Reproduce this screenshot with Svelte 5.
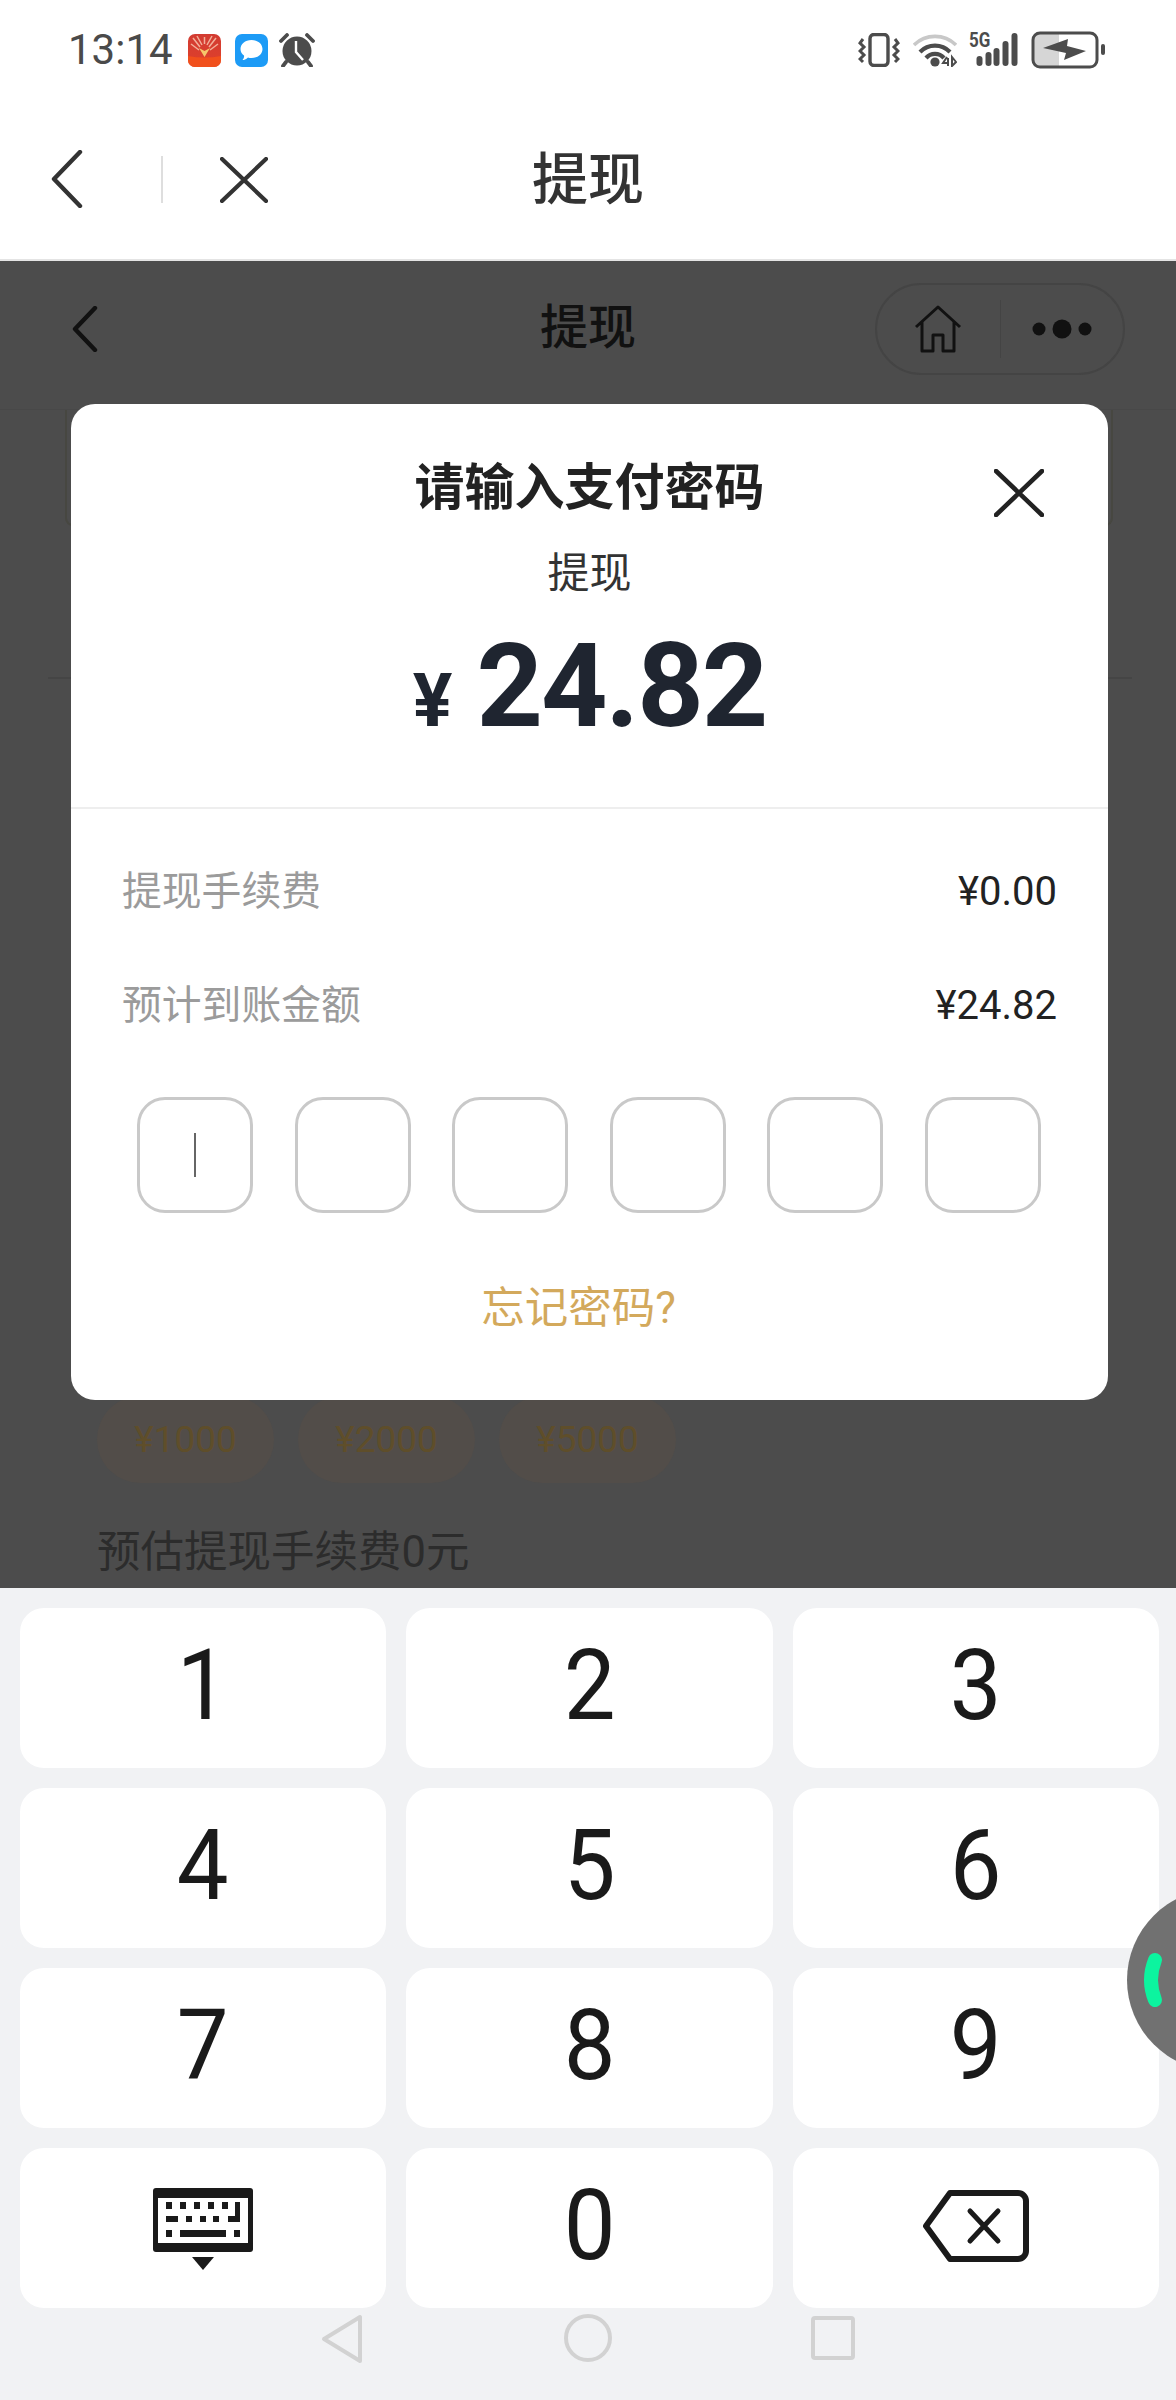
<script>
  const keys = ['1','2','3','4','5','6','7','8','9'];
  const boxes = [0,1,2,3,4,5];
</script>

<div class="screen">
  <div class="status">
    <div class="st-left">
      <span class="time">13:14</span>
      <svg class="ic33" viewBox="0 0 33 33">
        <defs><linearGradient id="rg" x1="0" y1="0" x2="0" y2="1"><stop offset="0" stop-color="#d23c32"/><stop offset="1" stop-color="#e0402a"/></linearGradient></defs>
        <rect width="33" height="33" rx="7" fill="url(#rg)"/>
        <path d="M0 22 Q16.5 25 33 22 L33 26 A7 7 0 0 1 26 33 L7 33 A7 7 0 0 1 0 26Z" fill="#f1501c"/>
        <path d="M5 4 L12 13 M28 4 L21 13 M9 2 L14 11 M24 2 L19 11 M3 10 L11 16 M30 10 L22 16 M16.5 3 V10" stroke="#f2b09a" stroke-width="1.5"/>
        <path d="M11 14 L16.5 23 L22 14 L16.5 17Z" fill="#f6c66a"/>
      </svg>
      <svg class="ic33 gap14" viewBox="0 0 33 33">
        <rect width="33" height="33" rx="7" fill="#1d9bf6"/>
        <path d="M16.5 6 C23 6 27.5 10 27.5 15 C27.5 20 23 24 16.5 24 C15 24 14 24 13 23.5 C11 25.5 9 26 7.5 26 C9 24.5 9.3 22.5 9 21.5 C6.8 20 5.5 18 5.5 15 C5.5 10 10 6 16.5 6Z" fill="#fff"/>
      </svg>
      <svg class="alarm" viewBox="0 0 36 34">
        <circle cx="18" cy="18" r="14.5" fill="#4c4c4c"/>
        <path d="M17 8 L17 19 L24 27" stroke="#fff" stroke-width="2.4" fill="none"/>
        <path d="M2 8 L8 2 M34 8 L28 2 M7 29 L4 33 M29 29 L32 33" stroke="#4c4c4c" stroke-width="3.8" stroke-linecap="round"/>
      </svg>
    </div>
    <div class="st-right">
      <svg class="vib" viewBox="0 0 42 34">
        <rect x="12" y="1.5" width="18" height="31" rx="4" fill="none" stroke="#4c4c4c" stroke-width="3.4"/>
        <path d="M5 6 L2 10 L6 14 L2 18 L6 22 L2 26 L5 29 M37 6 L40 10 L36 14 L40 18 L36 22 L40 26 L37 29" fill="none" stroke="#4c4c4c" stroke-width="3"/>
      </svg>
      <svg class="wifi" viewBox="0 0 44 34">
        <path d="M1 12 A30 30 0 0 1 43 12" fill="none" stroke="#c8c8c8" stroke-width="3.6"/>
        <path d="M7 19 A21 21 0 0 1 37 19" fill="none" stroke="#4c4c4c" stroke-width="4.2"/>
        <path d="M13 25 A12 12 0 0 1 31 25" fill="none" stroke="#4c4c4c" stroke-width="4.2"/>
        <circle cx="22" cy="29" r="4.6" fill="#4c4c4c"/>
        <path d="M34 24 L30 30 L35 30 M35 25 L35 33 M39 24 L39 33 L43 29Z" fill="none" stroke="#4c4c4c" stroke-width="2"/>
      </svg>
      <div class="sig">
        <span class="fiveg">5G</span>
        <svg class="bars" viewBox="0 0 44 34">
          <g fill="#4c4c4c">
            <rect x="6" y="23" width="6" height="10" rx="3"/>
            <rect x="15" y="19" width="6" height="14" rx="3"/>
            <rect x="23" y="15" width="6" height="18" rx="3"/>
            <rect x="32" y="8" width="6" height="25" rx="3"/>
            <rect x="41" y="0" width="6" height="33" rx="3"/>
          </g>
        </svg>
      </div>
      <svg class="batt" viewBox="0 0 74 38">
        <path d="M6 3 H28 V35 H6 A4 4 0 0 1 2 31 V7 A4 4 0 0 1 6 3Z" fill="#d6d6d6"/>
        <rect x="2" y="2" width="64" height="34" rx="7" fill="none" stroke="#4c4c4c" stroke-width="3"/>
        <rect x="70" y="13" width="4" height="11" rx="2" fill="#4c4c4c"/>
        <path d="M12 17 L37 8 L36 15 L55 20 L33 29 L35 22Z" fill="#4c4c4c"/>
      </svg>
    </div>
  </div>

  <div class="nav">
    <svg class="nav-back" viewBox="0 0 32 58"><path d="M29 2 L3 29 L29 56" fill="none" stroke="#333" stroke-width="4.4" stroke-linecap="round" stroke-linejoin="round"/></svg>
    <span class="nav-div"></span>
    <svg class="nav-x" viewBox="0 0 48 46"><path d="M2 2 L46 44 M46 2 L2 44" fill="none" stroke="#333" stroke-width="4.2" stroke-linecap="round"/></svg>
    <span class="nav-title">提现</span>
  </div>

  <div class="page">
    <div class="inner-nav">
      <svg class="in-back" viewBox="0 0 26 46"><path d="M23 2 L3 23 L23 44" fill="none" stroke="#111" stroke-width="4.4" stroke-linecap="round" stroke-linejoin="round"/></svg>
      <span class="in-title">提现</span>
      <div class="capsule">
        <svg class="home" viewBox="0 0 48 48"><path d="M2 22 L24 2 L46 22 M8 17 V46 H19 V30 H29 V46 H40 V17" fill="none" stroke="#111" stroke-width="3" stroke-linejoin="round"/></svg>
        <span class="cap-div"></span>
        <svg class="dots" viewBox="0 0 60 20"><circle cx="7" cy="10" r="6.5" fill="#111"/><circle cx="30" cy="10" r="9.5" fill="#111"/><circle cx="53" cy="10" r="6.5" fill="#111"/></svg>
      </div>
    </div>
    <div class="bg-card"></div>
    <div class="bg-rule"></div>
    <div class="chips">
      <span class="chip">¥1000</span>
      <span class="chip">¥2000</span>
      <span class="chip">¥5000</span>
    </div>
    <div class="est">预估提现手续费0元</div>

    <div class="modal">
      <div class="m-head">
        <div class="m-title">请输入支付密码</div>
        <svg class="m-x" viewBox="0 0 50 48"><path d="M2 2 L48 46 M48 2 L2 46" fill="none" stroke="#222" stroke-width="4.6" stroke-linecap="round"/></svg>
        <div class="m-sub">提现</div>
        <div class="m-amt"><span class="yen">¥</span><span class="num">24.82</span></div>
      </div>
      <div class="m-body">
        <div class="row"><span class="lab">提现手续费</span><span class="val">¥0.00</span></div>
        <div class="row"><span class="lab">预计到账金额</span><span class="val">¥24.82</span></div>
        <div class="pin">
          {#each boxes as b}
            <div class="box">{#if b === 0}<span class="caret"></span>{/if}</div>
          {/each}
        </div>
        <div class="forgot">忘记密码?</div>
      </div>
    </div>
  </div>

  <div class="kb">
    <div class="grid">
      {#each keys as k}
        <div class="key"><span class="d">{k}</span></div>
      {/each}
      <div class="key">
        <svg class="kbd" viewBox="0 0 100 82">
          <rect x="2.5" y="2.5" width="95" height="59" rx="3" fill="none" stroke="#1a1a1a" stroke-width="5"/>
          <rect x="0" y="0" width="100" height="10" rx="3" fill="#1a1a1a"/>
          <rect x="0" y="55" width="100" height="9" rx="3" fill="#1a1a1a"/>
          <g fill="#1a1a1a">
            <rect x="13" y="14" width="6" height="7"/><rect x="27" y="14" width="6" height="7"/><rect x="41" y="14" width="6" height="7"/><rect x="55" y="14" width="6" height="7"/><rect x="69" y="14" width="6" height="7"/>
            <rect x="82" y="14" width="5" height="20"/>
            <rect x="13" y="28" width="12" height="6"/><rect x="33" y="28" width="6" height="6"/><rect x="47" y="28" width="6" height="6"/><rect x="60" y="28" width="6" height="6"/><rect x="75" y="28" width="12" height="6"/>
            <rect x="13" y="42" width="6" height="7"/><rect x="27" y="42" width="46" height="7"/><rect x="81" y="42" width="6" height="7"/>
            <path d="M39 69 H61 L50 82Z"/>
          </g>
        </svg>
      </div>
      <div class="key"><span class="d">0</span></div>
      <div class="key">
        <svg class="bksp" viewBox="0 0 108 74">
          <path d="M28 4 H96 A8 8 0 0 1 104 12 V62 A8 8 0 0 1 96 70 H28 L4 37Z" fill="none" stroke="#1a1a1a" stroke-width="6" stroke-linejoin="round"/>
          <path d="M48 22 L76 52 M76 22 L48 52" fill="none" stroke="#1a1a1a" stroke-width="5" stroke-linecap="round"/>
        </svg>
      </div>
    </div>
    <div class="sysnav">
      <svg class="s-back" viewBox="0 0 42 50"><path d="M39 3 V47 L3 25Z" fill="none" stroke="#d2d2d2" stroke-width="4" stroke-linejoin="round"/></svg>
      <svg class="s-home" viewBox="0 0 48 48"><circle cx="24" cy="24" r="22" fill="none" stroke="#d2d2d2" stroke-width="4"/></svg>
      <svg class="s-rec" viewBox="0 0 44 44"><rect x="2" y="2" width="40" height="40" rx="2" fill="none" stroke="#d2d2d2" stroke-width="4"/></svg>
    </div>
  </div>

  <svg class="ball" viewBox="0 0 49 164">
    <circle cx="91" cy="82" r="91" fill="#717171"/>
    <path d="M28 62 Q20 82 28 102" fill="none" stroke="#0cf49f" stroke-width="14" stroke-linecap="round"/>
  </svg>
</div>

<style>
  :global(body) { margin: 0; background: #fff; }
  .screen {
    position: relative;
    width: 1176px;
    height: 2400px;
    overflow: hidden;
    display: flex;
    flex-direction: column;
    font-family: Roboto, "Noto Sans CJK SC", sans-serif;
    background: #fff;
  }
  .status {
    height: 100px;
    box-sizing: border-box;
    padding: 0 71px 0 68px;
    display: flex;
    justify-content: space-between;
    align-items: center;
  }
  .st-left, .st-right { display: flex; align-items: center; }
  .time { font-size: 42px; color: #4a4a4a; line-height: 48px; width: 120px; }
  .ic33 { width: 33px; height: 33px; display: block; }
  .gap14 { margin-left: 14px; }
  .alarm { width: 36px; height: 34px; margin-left: 11px; display: block; }
  .vib { width: 42px; height: 34px; display: block; }
  .wifi { width: 44px; height: 34px; margin-left: 13px; display: block; }
  .sig { position: relative; width: 62px; margin-left: 12px; height: 34px; }
  .fiveg { position: absolute; left: 0; top: -4px; font-size: 20px; font-weight: 700; color: #4c4c4c; line-height: 22px; transform: scaleX(.85); transform-origin: left; }
  .bars { position: absolute; left: 0; top: 0; width: 47px; height: 34px; overflow: visible; display: block; }
  .batt { width: 74px; height: 38px; display: block; }

  .nav {
    height: 161px;
    flex: none;
    box-sizing: border-box;
    border-bottom: 2px solid #e4e4e4;
    display: flex;
    align-items: center;
    padding: 0 0 0 51px;
    position: relative;
  }
  .nav-back { width: 32px; height: 58px; display: block; margin-top: -2px; }
  .nav-div { width: 2px; height: 47px; background: #dedede; margin-left: 78px; }
  .nav-x { width: 48px; height: 46px; margin-left: 57px; display: block; }
  .nav-title {
    position: absolute;
    left: 0; right: 0;
    text-align: center;
    font-size: 56px;
    font-weight: 500;
    line-height: 60px;
    color: #333;
  }

  .page {
    position: relative;
    flex: none;
    height: 1327px;
    background: #4c4c4c;
    overflow: hidden;
  }
  .inner-nav {
    height: 149px;
    position: relative;
    display: flex;
    align-items: center;
    justify-content: flex-end;
    padding: 0 51px 12px 72px;
    box-sizing: border-box;
    border-bottom: 1px solid #484848;
  }
  .in-back { width: 26px; height: 46px; margin-right: auto; display: block; }
  .in-title {
    position: absolute; left: 0; right: 0; text-align: center;
    font-size: 48px; font-weight: 500; color: #111; line-height: 56px; top: 39px;
  }
  .capsule {
    width: 250px; height: 92px; box-sizing: border-box;
    border: 2px solid #444; border-radius: 46px;
    display: flex; align-items: center; padding-left: 37px;
  }
  .home { width: 48px; height: 48px; display: block; }
  .cap-div { width: 1px; height: 58px; background: #444; margin-left: 38px; }
  .dots { width: 60px; height: 20px; margin-left: 31px; display: block; }
  .bg-card {
    height: 116px; margin: 0 63px 0 65px;
    border: 2px solid #474741; border-top: 0;
    border-radius: 0 0 8px 8px;
    box-sizing: border-box;
  }
  .bg-rule { margin: 151px 44px 0 48px; height: 2px; background: #454545; }
  .chips { display: flex; gap: 24px; padding-left: 97px; margin-top: 717px; }
  .chip {
    width: 177px; height: 87px; border-radius: 44px; background: #524d49;
    color: #5f4e2a; font-size: 37px; display: flex; align-items: center; justify-content: center;
  }
  .est { margin: 43px 0 0 97px; font-size: 43.5px; line-height: 54px; color: #2c2c2c; }

  .modal {
    position: absolute;
    left: 71px; top: 143px;
    width: 1037px; height: 996px;
    background: #fff;
    border-radius: 24px;
  }
  .m-head { height: 405px; box-sizing: border-box; border-bottom: 2px solid #eee; text-align: center; padding-top: 50px; position: relative; }
  .m-title { font-size: 50px; font-weight: 700; color: #222; line-height: 68px; }
  .m-x { position: absolute; left: 923px; top: 65px; width: 50px; height: 48px; }
  .m-sub { font-size: 42px; color: #333; line-height: 56px; margin-top: 24px; }
  .m-amt { display: flex; justify-content: center; align-items: baseline; margin-top: 19px; margin-left: 0; color: #1f2530; }
  .yen { font-size: 74px; font-weight: 700; margin-right: 24px; }
  .num { font-size: 116px; font-weight: 700; line-height: 130px; letter-spacing: -2px; }
  .m-body { padding: 0 51px; }
  .row { height: 114px; display: flex; justify-content: space-between; align-items: center; }
  .row:first-child { margin-top: 25px; }
  .lab { font-size: 39.8px; color: #9b9b9b; margin-bottom: 8px; }
  .val { font-size: 40px; color: #222; }
  .pin { display: flex; justify-content: space-between; padding: 0 16px 0 15px; margin-top: 35px; }
  .box {
    width: 116px; height: 116px; box-sizing: border-box;
    border: 3px solid #c9c9c9; border-radius: 28px;
    display: flex; align-items: center; justify-content: center;
  }
  .caret { width: 2px; height: 44px; background: #666; }
  .forgot { text-align: center; margin-top: 69px; font-size: 43.5px; line-height: 54px; color: #d3a95c; margin-left: -22px; }

  .kb {
    flex: 1;
    background: #f1f2f4;
    display: flex;
    flex-direction: column;
  }
  .grid {
    display: grid;
    grid-template-columns: 366px 367px 366px;
    grid-auto-rows: 160px;
    gap: 20px;
    padding: 20px 17px 0 20px;
  }
  .key {
    background: #fff; border-radius: 24px;
    display: flex; align-items: center; justify-content: center;
  }
  .d { font-size: 98px; line-height: 1; color: #1a1a1a; transform: translateY(-2px) scaleX(.94); display: block; }
  .kbd { width: 100px; height: 82px; display: block; margin-top: 2px; }
  .bksp { width: 108px; height: 74px; display: block; margin-top: -4px; }
  .sysnav { position: relative; height: 60px; margin-top: 6px; }
  .s-back { position: absolute; left: 321px; top: 0; width: 42px; height: 50px; }
  .s-home { position: absolute; left: 564px; top: 0; width: 48px; height: 48px; }
  .s-rec { position: absolute; left: 811px; top: 2px; width: 44px; height: 44px; }
  .ball { position: absolute; right: 0; top: 1898px; width: 49px; height: 164px; display: block; }
</style>
